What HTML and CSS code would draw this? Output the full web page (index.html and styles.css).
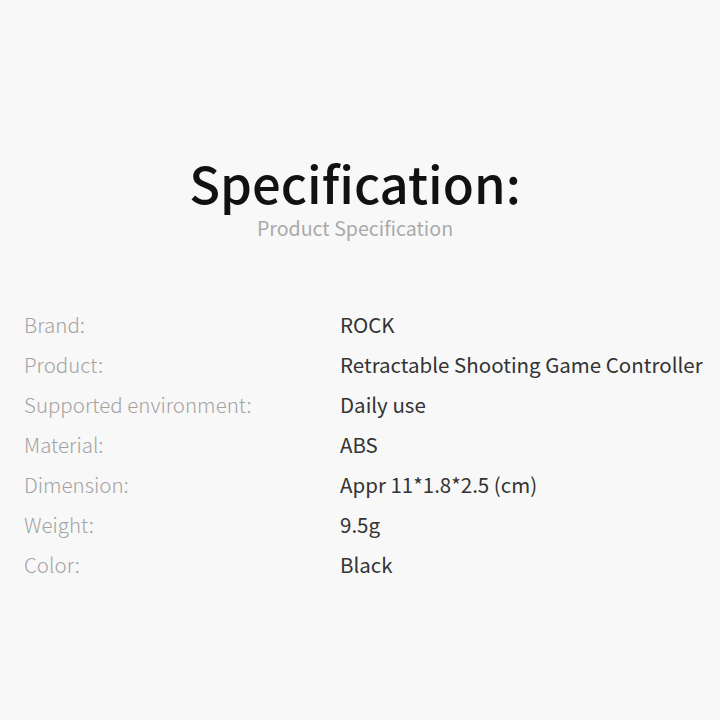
FILE: index.html
```html
<!DOCTYPE html>
<html>
<head>
<meta charset="utf-8">
<link rel="stylesheet" href="styles.css">
</head>
<body>
<div class="page">
  <header class="head">
    <h1 class="title">Specification:</h1>
    <p class="subtitle">Product Specification</p>
  </header>
  <div class="specs">
    <div class="row"><span class="label">Brand:</span><span class="value">ROCK</span></div>
    <div class="row"><span class="label">Product:</span><span class="value">Retractable Shooting Game Controller</span></div>
    <div class="row"><span class="label">Supported environment:</span><span class="value">Daily use</span></div>
    <div class="row"><span class="label">Material:</span><span class="value">ABS</span></div>
    <div class="row"><span class="label">Dimension:</span><span class="value">Appr 11*1.8*2.5 (cm)</span></div>
    <div class="row"><span class="label">Weight:</span><span class="value">9.5g</span></div>
    <div class="row"><span class="label">Color:</span><span class="value">Black</span></div>
  </div>
</div>
</body>
</html>
```
FILE: styles.css
```css
html, body {
  margin: 0;
  padding: 0;
  background: #f8f8f8;
}
.page {
  width: 720px;
  height: 720px;
  box-sizing: border-box;
  padding-top: 154px;
  font-family: "Noto Sans CJK SC", "Noto Sans", sans-serif;
}
.head {
  text-align: center;
  padding-right: 10px;
}
.title {
  margin: 0;
  font-size: 50.8px;
  font-weight: 500;
  line-height: 56px;
  color: #111;
}
.subtitle {
  margin: 0;
  font-size: 19.6px;
  line-height: 36px;
  font-weight: 400;
  color: #aaaaaa;
}
.specs {
  margin-top: 58px;
  padding-left: 24px;
  display: flex;
  flex-direction: column;
}
.row {
  display: grid;
  grid-template-columns: 316px auto;
  height: 40px;
  line-height: 40px;
  font-size: 20.5px;
}
.label {
  color: #a3a3a3;
  font-weight: 300;
}
.value {
  color: #333;
}
```
